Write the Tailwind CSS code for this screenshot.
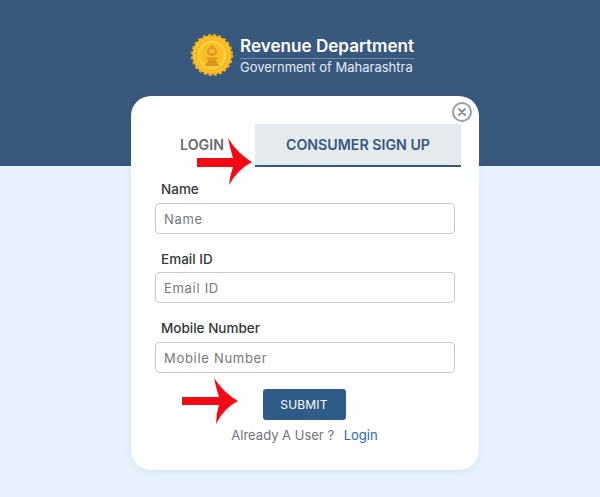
<!DOCTYPE html>
<html lang="en">
<head>
<meta charset="UTF-8">
<title>Revenue Department</title>
<script src="https://cdn.jsdelivr.net/npm/@tailwindcss/browser@4"></script>
</head>
<body class="bg-[#e6f3fe] w-[600px] h-[497px] overflow-hidden font-['Inter','Noto_Sans',sans-serif]">

<!-- header band -->
<header class="h-[166px] bg-[#38587e] flex pl-[191px] pt-[34px]">
  <div class="flex items-start h-[44px]">
    <svg width="42" height="42" viewBox="0 0 44 44" class="mr-[7px]">
      <circle cx="22" cy="22" r="20.5" fill="#f8c22c" stroke="#f4b01c" stroke-width="3" stroke-dasharray="3 2.4"/>
      <circle cx="22" cy="22" r="16" fill="#fbd23e" stroke="#f3ad20" stroke-width="1.2"/>
      <circle cx="22" cy="22" r="12.5" fill="#f9bf25"/>
      <path d="M22 11c1 2 4 3 5 6 1 3-1 6-5 6s-6-3-5-6c1-3 4-4 5-6z" fill="#e39a26"/>
      <path d="M15 24.500h14l-2.500 2.500h-9zM18 27.500h8l1.500 3 2 3h-15l2-3z" fill="#dc9124"/>
      <path d="M19 16h6v4h-6z" fill="#f6b72a"/>
    </svg>
    <div class="text-white w-[174px]">
      <p class="text-[17.1px] leading-[20px] font-semibold mt-[2px] border-b border-[#6d89ab] pb-[2px] whitespace-nowrap">Revenue Department</p>
      <p class="text-[13px] leading-[17px] text-[#e4ebf3] whitespace-nowrap">Government of Maharashtra</p>
    </div>
  </div>
</header>

<!-- card -->
<main class="relative w-[348px] h-[374px] ml-[131px] mt-[-70px] bg-white rounded-[20px] shadow-[0_2px_10px_rgba(60,90,130,0.10)] pt-[28px]">
  <button class="absolute top-[6px] right-[7px] w-[20px] h-[20px] rounded-full border-2 border-[#9a9fa5] flex items-center justify-center">
    <svg width="8" height="8" viewBox="0 0 8 8"><path d="M1 1l6 6M7 1L1 7" stroke="#8a8f95" stroke-width="1.8" stroke-linecap="round"/></svg>
  </button>

  <div class="flex ml-[18px] w-[312px] h-[43px] text-[14.2px] font-semibold">
    <div class="w-[106px] flex items-center justify-center text-[#666b70] border-b-2 border-transparent">LOGIN</div>
    <div class="w-[206px] flex items-center justify-center bg-[#e5eaef] text-[#38587e] border-b-2 border-[#38587e]">CONSUMER SIGN UP</div>
  </div>

  <form class="ml-[24px] w-[300px] mt-[14px]">
    <label class="block ml-[6px] text-[13.500px] leading-[16px] font-medium text-[#33373b]">Name</label>
    <input placeholder="Name" class="mt-[6px] block w-full h-[31px] px-[8px] border border-[#c6c9cc] rounded-[4px] text-[13px] tracking-[0.7px] placeholder:text-[#74787c]">
    <label class="block ml-[6px] mt-[17px] text-[13.500px] leading-[16px] font-medium text-[#33373b]">Email ID</label>
    <input placeholder="Email ID" class="mt-[5px] block w-full h-[31px] px-[8px] border border-[#c6c9cc] rounded-[4px] text-[13px] tracking-[0.7px] placeholder:text-[#74787c]">
    <label class="block ml-[6px] mt-[17px] text-[13.500px] leading-[16px] font-medium text-[#33373b]">Mobile Number</label>
    <input placeholder="Mobile Number" class="mt-[6px] block w-full h-[31px] px-[8px] border border-[#c6c9cc] rounded-[4px] text-[13px] tracking-[0.7px] placeholder:text-[#74787c]">
    <div class="flex justify-center mt-[16px] pr-[2px]">
      <button type="button" class="w-[83px] h-[31px] bg-[#2f5b87] rounded-[3px] text-white text-[12px] tracking-[0.2px]">SUBMIT</button>
    </div>
    <p class="mt-[6px] pr-[1px] text-center text-[13px] leading-[18px] text-[#6f7377]">Already A User ? <a href="#" class="ml-[6px] text-[#1f66b5]">Login</a></p>
  </form>

  <!-- red arrows over the content -->
  <svg class="absolute left-[66px] top-[42px]" width="56" height="48" viewBox="0 0 56 48">
    <path d="M31 0 Q41 16 55 24 Q41 31 32 47 Q33 37 36 29 L0 29 L0 20 L36 20 Q33 10 31 0 Z" fill="#f30a14"/>
  </svg>
  <svg class="absolute left-[51px] top-[282px]" width="57" height="47" viewBox="0 0 57 47">
    <path d="M32 0 Q42 15 56 23 Q42 30 34 46 Q34 36 37 27 L0 27 L0 19 L37 19 Q34 10 32 0 Z" fill="#f30a14"/>
  </svg>
</main>
</body>
</html>
